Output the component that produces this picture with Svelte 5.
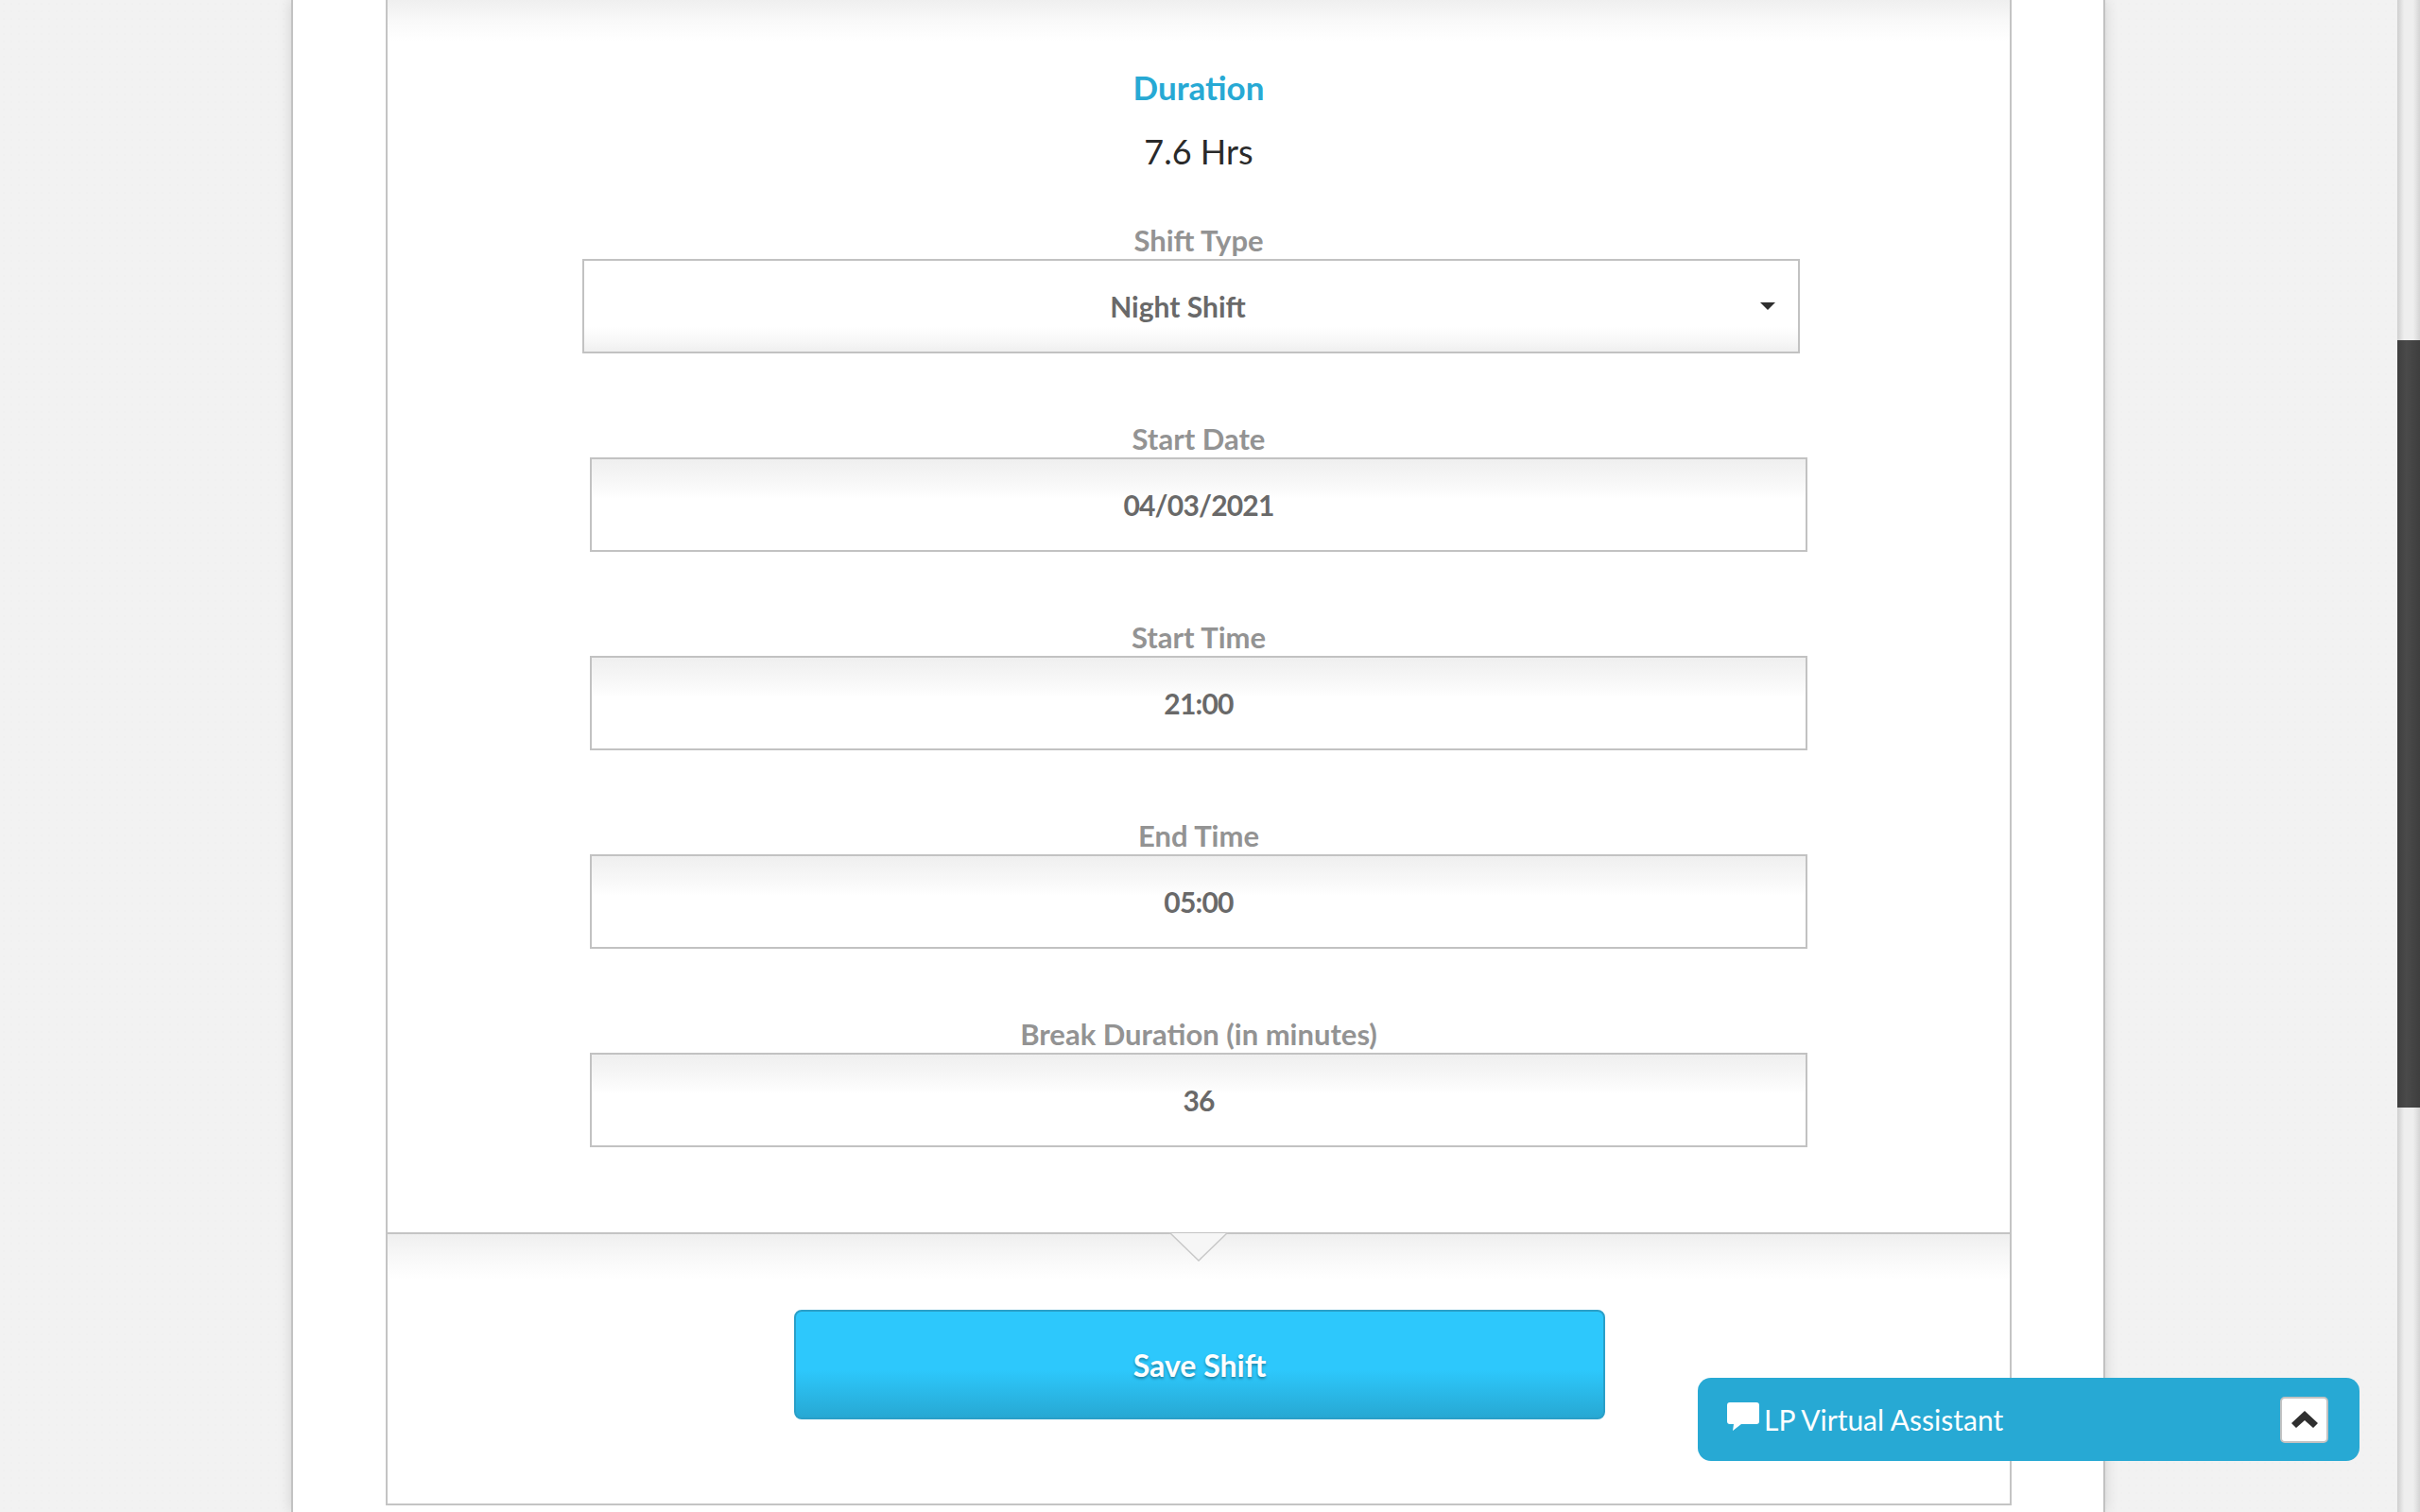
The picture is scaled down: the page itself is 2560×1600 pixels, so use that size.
<script>
  const fields = [
    { label: 'Start Date', value: '04/03/2021' },
    { label: 'Start Time', value: '21:00' },
    { label: 'End Time', value: '05:00' },
    { label: 'Break Duration (in minutes)', value: '36' }
  ];
</script>

<div class="page">
  <main class="card">
    <section class="panel">
      <div class="form">
        <h2 class="title">Duration</h2>
        <p class="hours">7.6 Hrs</p>

        <div class="field">
          <label for="type">Shift Type</label>
          <div class="select-wrap">
            <select id="type"><option>Night Shift</option></select>
            <span class="caret"></span>
          </div>
        </div>

        {#each fields as f, i}
          <div class="field">
            <label for={'f' + i}>{f.label}</label>
            <input id={'f' + i} value={f.value} readonly />
          </div>
        {/each}
      </div>

      <div class="actions">
        <svg class="notch" width="64" height="32" viewBox="0 0 64 32">
          <polygon points="2,1 32,30 62,1" fill="#f6f6f6" stroke="none" />
          <polyline points="1,0 32,30 63,0" fill="none" stroke="#c8c8c8" stroke-width="1.5" />
        </svg>
        <button class="save">Save Shift</button>
      </div>
    </section>
  </main>

  <aside class="chat">
    <div class="chat-title">
      <svg class="bubble" width="34" height="30" viewBox="0 0 34 30">
        <path d="M3 0h28a3 3 0 0 1 3 3v17a3 3 0 0 1-3 3H15l-9 7 1-7H3a3 3 0 0 1-3-3V3a3 3 0 0 1 3-3z" fill="#fff" />
      </svg>
      <span>LP Virtual Assistant</span>
    </div>
    <button class="toggle" aria-label="Expand">
      <svg width="28" height="18" viewBox="0 0 28 18">
        <path d="M14 0 28 13l-5 5-9-8-9 8-5-5z" fill="#2f2f2f" />
      </svg>
    </button>
  </aside>

  <div class="scrollbar"><div class="thumb"></div></div>
</div>

<style>
  :global(body) {
    margin: 0;
    background: #f2f2f2;
  }
  .page {
    position: relative;
    width: 2560px;
    height: 1600px;
    overflow: hidden;
    background-color: #f2f2f2;
    background-image: radial-gradient(rgba(0, 0, 0, 0.008) 1px, transparent 1.5px);
    background-size: 8px 8px;
    font-family: "Lato", "Noto Sans", sans-serif;
  }
  .card {
    box-sizing: border-box;
    width: 1919px;
    height: 1600px;
    margin-left: 308px;
    padding: 0 97px 0 98px;
    background: #fff;
    border-left: 2px solid #c2c2c2;
    border-right: 2px solid #c2c2c2;
    box-shadow: 0 0 14px rgba(0, 0, 0, 0.14);
  }
  .panel {
    box-sizing: border-box;
    height: 1593px;
    border: 2px solid #c4c4c4;
    border-top: 0;
    box-shadow: inset 12px 0 10px -10px rgba(0, 0, 0, 0.04), inset -12px 0 10px -10px rgba(0, 0, 0, 0.04);
  }
  .form {
    box-sizing: border-box;
    height: 1304px;
    padding-top: 73px;
    display: flex;
    flex-direction: column;
    align-items: center;
    background: linear-gradient(#efefef, #f9f9f9 22px, #fff 44px);
  }
  .title {
    margin: 0;
    font-size: 35px;
    line-height: 38px;
    font-weight: 700;
    color: #27a9d4;
  }
  .hours {
    margin: 29px 0 56px;
    font-size: 36px;
    line-height: 40px;
    color: #2a2a2a;
  }
  .field {
    display: flex;
    flex-direction: column;
    align-items: center;
    margin-bottom: 72px;
  }
  label {
    font-size: 31px;
    line-height: 36px;
    padding-bottom: 2px;
    font-weight: 700;
    color: #939393;
  }
  input,
  select {
    box-sizing: border-box;
    display: block;
    width: 1288px;
    height: 100px;
    padding: 0;
    border: 2px solid #c2c2c2;
    border-radius: 0;
    outline: none;
    font-family: inherit;
    font-size: 30px;
    font-weight: 700;
    color: #696969;
    text-align: center;
  }
  input {
    letter-spacing: -0.8px;
    background: linear-gradient(#efefef, #f8f8f8 26px, #fff 42px);
  }
  .select-wrap {
    position: relative;
    margin-right: 16px;
  }
  select {
    appearance: none;
    text-align-last: center;
    font-size: 30px;
    padding-right: 28px;
    background: linear-gradient(#fff 70px, #f8f8f8 84px, #efefef);
  }
  .caret {
    position: absolute;
    right: 26px;
    top: 46px;
    width: 0;
    height: 0;
    border-left: 8px solid transparent;
    border-right: 8px solid transparent;
    border-top: 8px solid #2f2f2f;
  }
  .actions {
    position: relative;
    box-sizing: border-box;
    height: 287px;
    padding: 80px 0 0 2px;
    display: flex;
    justify-content: center;
    align-items: flex-start;
    border-top: 2px solid #c4c4c4;
    background: linear-gradient(#efefef, #f8f8f8 24px, #fff 48px);
  }
  .notch {
    position: absolute;
    left: 50%;
    top: -2px;
    margin-left: -32px;
  }
  .save {
    box-sizing: border-box;
    width: 858px;
    height: 116px;
    border: 2px solid #2a9fc8;
    border-radius: 8px;
    background: linear-gradient(#2dc8fc 55%, #27a8d3);
    color: #fff;
    font-family: inherit;
    font-size: 32px;
    font-weight: 700;
    text-shadow: 0 2px 3px rgba(0, 0, 0, 0.35);
  }
  .chat {
    position: absolute;
    left: 1796px;
    top: 1458px;
    box-sizing: border-box;
    width: 700px;
    height: 88px;
    padding: 0 33px 0 31px;
    display: flex;
    align-items: center;
    justify-content: space-between;
    background: #27a9d4;
    border-radius: 14px;
  }
  .chat-title {
    display: flex;
    align-items: center;
    gap: 5px;
    color: #fff;
    font-size: 30px;
    font-weight: 400;
  }
  .bubble {
    margin-top: -6px;
  }
  .toggle {
    box-sizing: border-box;
    width: 51px;
    height: 49px;
    padding: 0;
    display: flex;
    align-items: center;
    justify-content: center;
    background: #fff;
    border: 2px solid #c2c2c2;
    border-radius: 5px;
  }
  .scrollbar {
    position: absolute;
    right: 0;
    top: 0;
    width: 24px;
    height: 1600px;
    background: linear-gradient(90deg, #cfcfcf, #eeeeee 30%, #eeeeee 70%, #d4d4d4);
  }
  .thumb {
    margin-top: 360px;
    height: 812px;
    background: linear-gradient(90deg, #3e3e3e, #4a4a4a 40%, #3e3e3e);
  }
</style>
